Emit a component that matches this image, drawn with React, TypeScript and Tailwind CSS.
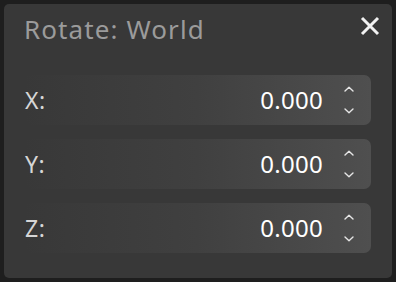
import React from "react";

function Chevrons() {
  return (
    <div className="flex flex-col items-center justify-between h-[28px] w-[10px]">
      <svg width="10" height="6" viewBox="0 0 10 6" fill="none">
        <path d="M1 5 L5 1.3 L9 5" stroke="#e6e6e6" strokeWidth="1.4" strokeLinecap="round" strokeLinejoin="round" />
      </svg>
      <svg width="10" height="6" viewBox="0 0 10 6" fill="none">
        <path d="M1 1 L5 4.7 L9 1" stroke="#e6e6e6" strokeWidth="1.4" strokeLinecap="round" strokeLinejoin="round" />
      </svg>
    </div>
  );
}

function Field({ label }: { label: string }) {
  return (
    <div className="flex items-center h-[50px] rounded-[7px] bg-gradient-to-r from-[#383838] via-[#404040] to-[#4f4f4f]">
      <span className="pl-[1px] text-[23px] text-[#d6d6d6] leading-none tracking-[0.5px]">{label}</span>
      <span className="ml-auto text-[24px] text-white leading-none tracking-[0.3px]">0.000</span>
      <div className="w-[48px] flex justify-center pl-[3px]">
        <Chevrons />
      </div>
    </div>
  );
}

export default function App() {
  return (
    <div
      className="w-[396px] h-[282px] bg-[#1e1e1e] p-[4px]"
      style={{ fontFamily: '"Noto Sans", "Open Sans", sans-serif' }}
    >
      <div className="h-[274px] rounded-[5px] bg-[#383838] pl-[20px] pr-[21px] flex flex-col">
        <div className="flex items-start h-[71px]">
          <span className="pt-[12px] text-[26px] leading-none text-[#9b9b9b] tracking-[1.1px]">
            Rotate: World
          </span>
          <div className="ml-auto mt-[12px] mr-[-9px]">
            <svg width="20" height="20" viewBox="0 0 20 20">
              <path d="M2 2 L18 18 M18 2 L2 18" stroke="#f2f2f2" strokeWidth="3" strokeLinecap="butt" />
            </svg>
          </div>
        </div>
        <div className="flex flex-col gap-[14px]">
          <Field label="X:" />
          <Field label="Y:" />
          <Field label="Z:" />
        </div>
      </div>
    </div>
  );
}
